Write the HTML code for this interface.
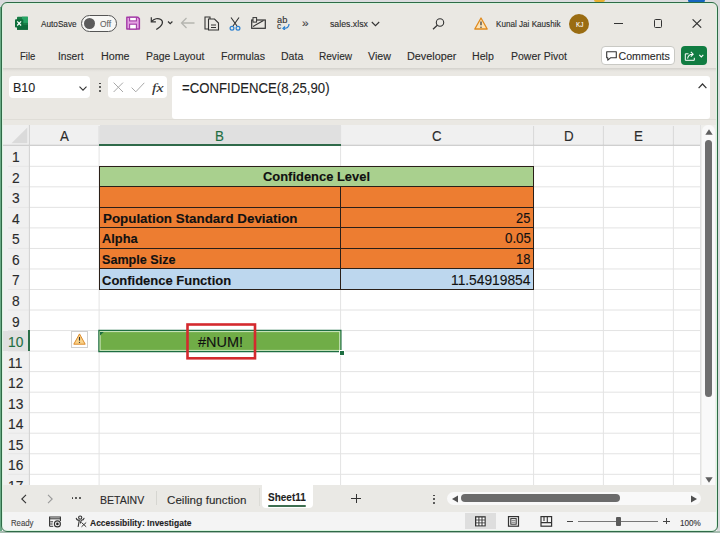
<!DOCTYPE html>
<html><head><meta charset="utf-8"><style>
html,body{margin:0;padding:0;width:720px;height:533px;overflow:hidden;background:#e6e6e6}
body{position:relative;font-family:"Liberation Sans", sans-serif}
.t{position:absolute;white-space:pre;line-height:1;transform-origin:0 0;-webkit-text-stroke:0.12px currentColor}
.r{position:absolute}
</style></head><body>
<div class="r" style="left:0px;top:0px;width:720px;height:533px;background:#dcdcdf"></div>
<div class="r" style="left:0px;top:7px;width:2px;height:526px;background:#6aaa85"></div>
<div class="r" style="left:0px;top:531px;width:720px;height:2px;background:#a9bfb3"></div>
<div class="r" style="left:593.5px;top:0px;width:11px;height:1.5px;background:#e8b030;border-radius:0 0 2px 2px"></div>
<div class="r" style="left:688px;top:0px;width:17px;height:2.5px;background:#1565c0;border-radius:0 0 8px 8px"></div>
<div class="r" style="left:1px;top:2px;width:717px;height:529.5px;background:#eae8e3;border-radius:6px"></div>
<svg class="r" style="left:14px;top:16px" width="16" height="15" viewBox="14 16 16 15">
<rect x="17" y="16.7" width="11" height="13.1" rx="0.8" fill="#1a7d46"/>
<rect x="22" y="16.7" width="6" height="6.2" fill="#27a465"/>
<rect x="17" y="25" width="11" height="4.8" fill="#0f6a3a"/>
<rect x="15" y="19.3" width="8.3" height="8.2" rx="0.9" fill="#0e6e3b"/>
<path d="M17.2 21.3 L21.1 25.5 M21.1 21.3 L17.2 25.5" stroke="#fff" stroke-width="1.2"/>
</svg>
<div class="t" style="left:40.70px;top:20px;font-size:8.72px;font-weight:400;color:#2b2b2b;font-family:'Liberation Sans', sans-serif;transform:scaleX(0.9418);">AutoSave</div>
<div class="r" style="left:81px;top:15.3px;width:35.5px;height:16.3px;border:1px solid #555;border-radius:9px;box-sizing:border-box;background:#f7f7f5"></div>
<div class="r" style="left:84.3px;top:17.9px;width:11px;height:11px;background:#5c5c5c;border-radius:50%"></div>
<div class="t" style="left:99.60px;top:20px;font-size:9.01px;font-weight:400;color:#666;font-family:'Liberation Sans', sans-serif;transform:scaleX(0.9333);">Off</div>
<svg class="r" style="left:125px;top:15px" width="17" height="16" viewBox="125 15 17 16">
<path d="M126.8 17.3 H138 L139.4 18.7 V29 H126.8 Z" fill="#e3a3e2" stroke="#a43ba7" stroke-width="1.4" stroke-linejoin="round"/>
<rect x="129.6" y="17.3" width="6.8" height="3.6" fill="#fff" stroke="#a43ba7" stroke-width="1.1"/>
<rect x="129.6" y="24.2" width="6.8" height="4.8" fill="#fff" stroke="#a43ba7" stroke-width="1.1"/>
</svg>
<svg class="r" style="left:148px;top:14px" width="28" height="18" viewBox="148 14 28 18">
<path d="M151.3 17.2 V21.8 H155.9" fill="none" stroke="#333" stroke-width="1.2"/>
<path d="M151.6 21.5 C154 18.6 158 17.6 160.8 19.6 C163.8 21.8 163 25.3 156.3 29.6" fill="none" stroke="#333" stroke-width="1.2"/>
<path d="M168 21.5 L170.2 23.6 L172.4 21.5" fill="none" stroke="#333" stroke-width="1.2"/>
</svg>
<svg class="r" style="left:180px;top:17px" width="16" height="12" viewBox="0 0 16 12">
<path d="M1.5 6 H14.5 M6.5 1 L1.5 6 L6.5 11" fill="none" stroke="#b5b5b0" stroke-width="1.3"/>
</svg>
<svg class="r" style="left:204px;top:16px" width="16" height="15" viewBox="0 0 16 15">
<path d="M1 1 H6 V13 H1 Z" fill="none" stroke="#333" stroke-width="1.1"/>
<path d="M4.5 3 H10.5 L14.5 7 V14 H4.5 Z" fill="#eae8e3" stroke="#333" stroke-width="1.1"/>
<path d="M7 9 H12 M7 11.5 H12" stroke="#333" stroke-width="1"/>
</svg>
<svg class="r" style="left:229px;top:17px" width="12" height="14" viewBox="0 0 12 14">
<path d="M2 0.5 L8 9 M10 0.5 L4 9" fill="none" stroke="#333" stroke-width="1.1"/>
<circle cx="3" cy="11.3" r="1.9" fill="none" stroke="#2a7fd0" stroke-width="1.2"/>
<circle cx="9" cy="11.3" r="1.9" fill="none" stroke="#2a7fd0" stroke-width="1.2"/>
</svg>
<svg class="r" style="left:251px;top:17px" width="15" height="12" viewBox="0 0 15 12">
<rect x="0.7" y="3" width="13.6" height="8.3" fill="none" stroke="#333" stroke-width="1.2"/>
<path d="M2 9.5 L12.5 3.5" stroke="#333" stroke-width="1.1"/>
<rect x="2" y="0.6" width="3.6" height="4.5" fill="#eae8e3" stroke="#333" stroke-width="1"/>
</svg>
<div class="t" style="left:276.90px;top:17px;font-size:8.2px;font-weight:400;color:#333;font-family:'Liberation Sans', sans-serif;transform:scaleX(1.1316);">ab</div>
<div class="t" style="left:276.80px;top:23px;font-size:8.2px;font-weight:400;color:#333;font-family:'Liberation Sans', sans-serif;transform:scaleX(1.0244);">c</div>
<svg class="r" style="left:281px;top:23px" width="9" height="7" viewBox="0 0 9 7">
<path d="M8 1 C8 4.5 6 5.5 2 5.5 M4 3.5 L2 5.5 L4 7" fill="none" stroke="#2a7fd0" stroke-width="1.2"/>
</svg>
<div class="t" style="left:302.30px;top:18px;font-size:10.5px;font-weight:400;color:#444;font-family:'Liberation Sans', sans-serif;transform:scaleX(1.1497);">»</div>
<div class="t" style="left:329.70px;top:20px;font-size:9.1px;font-weight:400;color:#2b2b2b;font-family:'Liberation Sans', sans-serif;transform:scaleX(0.9607);">sales.xlsx</div>
<svg class="r" style="left:371px;top:21px" width="9" height="6" viewBox="0 0 9 6">
<path d="M0.8 1 L4.5 4.7 L8.2 1" fill="none" stroke="#333" stroke-width="1.1"/>
</svg>
<svg class="r" style="left:432px;top:17.5px" width="13" height="12" viewBox="0 0 13 12">
<circle cx="8" cy="4.5" r="3.7" fill="none" stroke="#333" stroke-width="1.1"/>
<path d="M5.3 7.3 L1 11.3" stroke="#333" stroke-width="1.2"/>
</svg>
<svg class="r" style="left:474px;top:17px" width="14" height="13" viewBox="0 0 14 13">
<path d="M7 1 L13.2 12 H0.8 Z" fill="#fbe3b8" stroke="#e08a1e" stroke-width="1.3" stroke-linejoin="round"/>
<path d="M7 4.5 V8.3" stroke="#333" stroke-width="1.2"/>
<circle cx="7" cy="10.2" r="0.7" fill="#333"/>
</svg>
<div class="t" style="left:496.40px;top:20px;font-size:8.58px;font-weight:400;color:#2b2b2b;font-family:'Liberation Sans', sans-serif;transform:scaleX(0.9465);">Kunal Jai Kaushik</div>
<div class="r" style="left:568.8px;top:13.8px;width:20.2px;height:20px;background:#9a6c12;border-radius:50%"></div>
<div class="t" style="left:575.90px;top:21px;font-size:7.85px;font-weight:400;color:#fff;font-family:'Liberation Sans', sans-serif;transform:scaleX(0.7982);">KJ</div>
<div class="r" style="left:614px;top:22.5px;width:9px;height:1px;background:#333"></div>
<div class="r" style="left:653.5px;top:19.2px;width:8.5px;height:8.5px;border:1.1px solid #333;border-radius:1.5px;box-sizing:border-box"></div>
<svg class="r" style="left:692px;top:19px" width="10" height="9" viewBox="0 0 10 9">
<path d="M0.6 0.3 L9.2 8.7 M9.2 0.3 L0.6 8.7" stroke="#333" stroke-width="1.1"/>
</svg>
<div class="t" style="left:19.70px;top:51px;font-size:10.61px;font-weight:400;color:#2b2b2b;font-family:'Liberation Sans', sans-serif;transform:scaleX(0.8957);">File</div>
<div class="t" style="left:57.70px;top:51px;font-size:10.61px;font-weight:400;color:#2b2b2b;font-family:'Liberation Sans', sans-serif;transform:scaleX(0.9614);">Insert</div>
<div class="t" style="left:100.70px;top:51px;font-size:10.61px;font-weight:400;color:#2b2b2b;font-family:'Liberation Sans', sans-serif;transform:scaleX(1.0096);">Home</div>
<div class="t" style="left:146.00px;top:51px;font-size:10.61px;font-weight:400;color:#2b2b2b;font-family:'Liberation Sans', sans-serif;transform:scaleX(0.9786);">Page Layout</div>
<div class="t" style="left:221.00px;top:51px;font-size:10.61px;font-weight:400;color:#2b2b2b;font-family:'Liberation Sans', sans-serif;transform:scaleX(0.9945);">Formulas</div>
<div class="t" style="left:281.00px;top:51px;font-size:10.61px;font-weight:400;color:#2b2b2b;font-family:'Liberation Sans', sans-serif;transform:scaleX(0.9938);">Data</div>
<div class="t" style="left:318.60px;top:51px;font-size:10.61px;font-weight:400;color:#2b2b2b;font-family:'Liberation Sans', sans-serif;transform:scaleX(0.9483);">Review</div>
<div class="t" style="left:367.60px;top:51px;font-size:10.61px;font-weight:400;color:#2b2b2b;font-family:'Liberation Sans', sans-serif;transform:scaleX(1.0039);">View</div>
<div class="t" style="left:406.50px;top:51px;font-size:10.61px;font-weight:400;color:#2b2b2b;font-family:'Liberation Sans', sans-serif;transform:scaleX(1.0210);">Developer</div>
<div class="t" style="left:472.20px;top:51px;font-size:10.61px;font-weight:400;color:#2b2b2b;font-family:'Liberation Sans', sans-serif;transform:scaleX(0.9998);">Help</div>
<div class="t" style="left:511.00px;top:51px;font-size:10.61px;font-weight:400;color:#2b2b2b;font-family:'Liberation Sans', sans-serif;transform:scaleX(0.9893);">Power Pivot</div>
<div class="r" style="left:601.2px;top:46.3px;width:73.6px;height:19px;background:#fff;border:1px solid #c9c9c4;border-radius:4px;box-sizing:border-box"></div>
<svg class="r" style="left:605.5px;top:51px" width="11" height="10" viewBox="0 0 11 10">
<path d="M0.7 0.7 H10.3 V6.8 H4.5 L1.8 9.2 V6.8 H0.7 Z" fill="none" stroke="#333" stroke-width="1.1" stroke-linejoin="round"/>
</svg>
<div class="t" style="left:618.50px;top:51px;font-size:10.61px;font-weight:400;color:#2b2b2b;font-family:'Liberation Sans', sans-serif;transform:scaleX(1.0000);">Comments</div>
<div class="r" style="left:681.2px;top:45.8px;width:25.8px;height:19.5px;background:#107c41;border-radius:4px"></div>
<svg class="r" style="left:683px;top:49px" width="22" height="13" viewBox="683 49 22 13">
<path d="M688.5 53.8 H685.3 V60.3 H694.3 V57.8" fill="none" stroke="#fff" stroke-width="1"/>
<path d="M687.6 58.6 C688 55.6 690 54.2 692.6 54.2 M690.8 51.8 L693.2 54.2 L690.8 56.6" fill="none" stroke="#fff" stroke-width="1.05"/>
<path d="M699.3 54.9 L701.3 56.9 L703.3 54.9" fill="none" stroke="#fff" stroke-width="1.1"/>
</svg>
<div class="r" style="left:2px;top:68px;width:714.5px;height:57px;background:linear-gradient(#d6d4cf 0,#d6d4cf 1px,#e3e1dc 2px,#eae8e3 4px)"></div>
<div class="r" style="left:9px;top:75.75px;width:81.25px;height:22.5px;background:#fff;border-radius:4px"></div>
<div class="t" style="left:12.75px;top:81px;font-size:13.66px;font-weight:400;color:#1f1f1f;font-family:'Liberation Sans', sans-serif;transform:scaleX(0.9151);">B10</div>
<svg class="r" style="left:78.5px;top:85.5px" width="8" height="5" viewBox="0 0 8 5">
<path d="M0.5 0.6 L4 4.1 L7.5 0.6" fill="none" stroke="#333" stroke-width="1.1"/>
</svg>
<div class="r" style="left:98.8px;top:82.6px;width:1.9px;height:1.9px;background:#333;border-radius:50%"></div>
<div class="r" style="left:98.8px;top:86.2px;width:1.9px;height:1.9px;background:#333;border-radius:50%"></div>
<div class="r" style="left:98.8px;top:89.8px;width:1.9px;height:1.9px;background:#333;border-radius:50%"></div>
<div class="r" style="left:108px;top:75.75px;width:59px;height:22.5px;background:#fff;border-radius:4px"></div>
<svg class="r" style="left:112.5px;top:81.5px" width="11" height="11" viewBox="0 0 11 11">
<path d="M0.6 0.6 L10 10 M10 0.6 L0.6 10" stroke="#a8a8a8" stroke-width="1"/>
</svg>
<svg class="r" style="left:130.5px;top:81.5px" width="14" height="11" viewBox="0 0 14 11">
<path d="M0.6 5.6 L4.8 9.8 L13.3 0.8" fill="none" stroke="#a8a8a8" stroke-width="1"/>
</svg>
<div class="t" style="left:151.90px;top:81px;font-size:13.5px;font-weight:400;color:#2b2b2b;font-family:'Liberation Serif', serif;transform:scaleX(1.1728);font-style:italic">fx</div>
<div class="r" style="left:2px;top:119.2px;width:714.5px;height:1px;background:#dfddd7"></div>
<div class="r" style="left:171.7px;top:75.6px;width:538px;height:43.4px;background:#fff;border-radius:3px"></div>
<div class="t" style="left:181.70px;top:81px;font-size:14.53px;font-weight:400;color:#1f1f1f;font-family:'Liberation Sans', sans-serif;transform:scaleX(0.9076);">=CONFIDENCE(8,25,90)</div>
<svg class="r" style="left:698px;top:83px" width="9" height="6" viewBox="0 0 9 6">
<path d="M0.6 5.2 L4.5 1 L8.4 5.2" fill="none" stroke="#333" stroke-width="1.2"/>
</svg>
<div class="r" style="left:2px;top:125px;width:698.5px;height:20.5px;background:#f0f0f0"></div>
<div class="r" style="left:2px;top:145.5px;width:27.2px;height:339.5px;background:#f0f0f0"></div>
<div class="r" style="left:29.2px;top:145.5px;width:671.3px;height:339.5px;background:#fff"></div>
<svg class="r" style="left:11px;top:127px" width="17" height="17" viewBox="0 0 17 17"><path d="M16.3 0.5 V16.3 H0.5 Z" fill="#dadada"/></svg>
<svg class="r" style="left:0;top:0" width="720" height="533" viewBox="0 0 720 533"><path d="M29.5 166.30 H700.3" stroke="#e3e3e3" stroke-width="1"/><path d="M8 166.30 H29" stroke="#e6e6e6" stroke-width="1"/><path d="M29.5 186.84 H700.3" stroke="#e3e3e3" stroke-width="1"/><path d="M8 186.84 H29" stroke="#e6e6e6" stroke-width="1"/><path d="M29.5 207.37 H700.3" stroke="#e3e3e3" stroke-width="1"/><path d="M8 207.37 H29" stroke="#e6e6e6" stroke-width="1"/><path d="M29.5 227.90 H700.3" stroke="#e3e3e3" stroke-width="1"/><path d="M8 227.90 H29" stroke="#e6e6e6" stroke-width="1"/><path d="M29.5 248.44 H700.3" stroke="#e3e3e3" stroke-width="1"/><path d="M8 248.44 H29" stroke="#e6e6e6" stroke-width="1"/><path d="M29.5 268.97 H700.3" stroke="#e3e3e3" stroke-width="1"/><path d="M8 268.97 H29" stroke="#e6e6e6" stroke-width="1"/><path d="M29.5 289.50 H700.3" stroke="#e3e3e3" stroke-width="1"/><path d="M8 289.50 H29" stroke="#e6e6e6" stroke-width="1"/><path d="M29.5 310.03 H700.3" stroke="#e3e3e3" stroke-width="1"/><path d="M8 310.03 H29" stroke="#e6e6e6" stroke-width="1"/><path d="M29.5 330.57 H700.3" stroke="#e3e3e3" stroke-width="1"/><path d="M8 330.57 H29" stroke="#e6e6e6" stroke-width="1"/><path d="M29.5 351.10 H700.3" stroke="#e3e3e3" stroke-width="1"/><path d="M8 351.10 H29" stroke="#e6e6e6" stroke-width="1"/><path d="M29.5 371.63 H700.3" stroke="#e3e3e3" stroke-width="1"/><path d="M8 371.63 H29" stroke="#e6e6e6" stroke-width="1"/><path d="M29.5 392.17 H700.3" stroke="#e3e3e3" stroke-width="1"/><path d="M8 392.17 H29" stroke="#e6e6e6" stroke-width="1"/><path d="M29.5 412.70 H700.3" stroke="#e3e3e3" stroke-width="1"/><path d="M8 412.70 H29" stroke="#e6e6e6" stroke-width="1"/><path d="M29.5 433.23 H700.3" stroke="#e3e3e3" stroke-width="1"/><path d="M8 433.23 H29" stroke="#e6e6e6" stroke-width="1"/><path d="M29.5 453.76 H700.3" stroke="#e3e3e3" stroke-width="1"/><path d="M8 453.76 H29" stroke="#e6e6e6" stroke-width="1"/><path d="M29.5 474.30 H700.3" stroke="#e3e3e3" stroke-width="1"/><path d="M8 474.30 H29" stroke="#e6e6e6" stroke-width="1"/><path d="M29.5 494.83 H700.3" stroke="#e3e3e3" stroke-width="1"/><path d="M8 494.83 H29" stroke="#e6e6e6" stroke-width="1"/><path d="M99.1 145.5 V485" stroke="#e3e3e3" stroke-width="1"/><path d="M99.1 126 V145" stroke="#d8d8d8" stroke-width="1"/><path d="M340.6 145.5 V485" stroke="#e3e3e3" stroke-width="1"/><path d="M340.6 126 V145" stroke="#d8d8d8" stroke-width="1"/><path d="M533.6 145.5 V485" stroke="#e3e3e3" stroke-width="1"/><path d="M533.6 126 V145" stroke="#d8d8d8" stroke-width="1"/><path d="M603.4 145.5 V485" stroke="#e3e3e3" stroke-width="1"/><path d="M603.4 126 V145" stroke="#d8d8d8" stroke-width="1"/><path d="M673.4 145.5 V485" stroke="#e3e3e3" stroke-width="1"/><path d="M673.4 126 V145" stroke="#d8d8d8" stroke-width="1"/></svg>
<svg class="r" style="left:0;top:0" width="720" height="533" viewBox="0 0 720 533"><path d="M2 145.3 H700.3" stroke="#c4c4c4" stroke-width="1.1"/><path d="M29.4 125 V485" stroke="#d0d0d0" stroke-width="1"/></svg>
<div class="r" style="left:99.5px;top:125px;width:241px;height:20px;background:#e0e0e0"></div>
<div class="r" style="left:99.2px;top:144px;width:241.4px;height:2px;background:#2f6a4a"></div>
<div class="r" style="left:2px;top:330.567px;width:26.5px;height:20.533000000000015px;background:#e0e0e0"></div>
<div class="r" style="left:28.3px;top:330.267px;width:1.7px;height:21.133000000000017px;background:#2a6d47"></div>
<div class="t" style="left:59.73px;top:129px;font-size:14.83px;font-weight:400;color:#2b2b2b;font-family:'Liberation Sans', sans-serif;transform:scaleX(0.8997);">A</div>
<div class="t" style="left:215.46px;top:129px;font-size:14.83px;font-weight:400;color:#1e6e42;font-family:'Liberation Sans', sans-serif;transform:scaleX(0.8997);">B</div>
<div class="t" style="left:432.35px;top:129px;font-size:14.83px;font-weight:400;color:#2b2b2b;font-family:'Liberation Sans', sans-serif;transform:scaleX(0.8997);">C</div>
<div class="t" style="left:563.80px;top:129px;font-size:14.83px;font-weight:400;color:#2b2b2b;font-family:'Liberation Sans', sans-serif;transform:scaleX(0.8997);">D</div>
<div class="t" style="left:634.01px;top:129px;font-size:14.83px;font-weight:400;color:#2b2b2b;font-family:'Liberation Sans', sans-serif;transform:scaleX(0.8997);">E</div>
<div class="t" style="left:11.57px;top:150px;font-size:14.53px;font-weight:400;color:#2b2b2b;font-family:'Liberation Sans', sans-serif;transform:scaleX(0.9503);">1</div>
<div class="t" style="left:11.57px;top:171px;font-size:14.53px;font-weight:400;color:#2b2b2b;font-family:'Liberation Sans', sans-serif;transform:scaleX(0.9503);">2</div>
<div class="t" style="left:11.57px;top:191px;font-size:14.53px;font-weight:400;color:#2b2b2b;font-family:'Liberation Sans', sans-serif;transform:scaleX(0.9503);">3</div>
<div class="t" style="left:11.57px;top:212px;font-size:14.53px;font-weight:400;color:#2b2b2b;font-family:'Liberation Sans', sans-serif;transform:scaleX(0.9503);">4</div>
<div class="t" style="left:11.57px;top:232px;font-size:14.53px;font-weight:400;color:#2b2b2b;font-family:'Liberation Sans', sans-serif;transform:scaleX(0.9503);">5</div>
<div class="t" style="left:11.57px;top:253px;font-size:14.53px;font-weight:400;color:#2b2b2b;font-family:'Liberation Sans', sans-serif;transform:scaleX(0.9503);">6</div>
<div class="t" style="left:11.57px;top:273px;font-size:14.53px;font-weight:400;color:#2b2b2b;font-family:'Liberation Sans', sans-serif;transform:scaleX(0.9503);">7</div>
<div class="t" style="left:11.57px;top:294px;font-size:14.53px;font-weight:400;color:#2b2b2b;font-family:'Liberation Sans', sans-serif;transform:scaleX(0.9503);">8</div>
<div class="t" style="left:11.57px;top:315px;font-size:14.53px;font-weight:400;color:#2b2b2b;font-family:'Liberation Sans', sans-serif;transform:scaleX(0.9503);">9</div>
<div class="t" style="left:7.74px;top:335px;font-size:14.53px;font-weight:400;color:#1e6e42;font-family:'Liberation Sans', sans-serif;transform:scaleX(0.9503);">10</div>
<div class="t" style="left:8.22px;top:356px;font-size:14.53px;font-weight:400;color:#2b2b2b;font-family:'Liberation Sans', sans-serif;transform:scaleX(0.9503);">11</div>
<div class="t" style="left:7.74px;top:376px;font-size:14.53px;font-weight:400;color:#2b2b2b;font-family:'Liberation Sans', sans-serif;transform:scaleX(0.9503);">12</div>
<div class="t" style="left:7.74px;top:397px;font-size:14.53px;font-weight:400;color:#2b2b2b;font-family:'Liberation Sans', sans-serif;transform:scaleX(0.9503);">13</div>
<div class="t" style="left:7.74px;top:417px;font-size:14.53px;font-weight:400;color:#2b2b2b;font-family:'Liberation Sans', sans-serif;transform:scaleX(0.9503);">14</div>
<div class="t" style="left:7.74px;top:438px;font-size:14.53px;font-weight:400;color:#2b2b2b;font-family:'Liberation Sans', sans-serif;transform:scaleX(0.9503);">15</div>
<div class="t" style="left:7.74px;top:458px;font-size:14.53px;font-weight:400;color:#2b2b2b;font-family:'Liberation Sans', sans-serif;transform:scaleX(0.9503);">16</div>
<div class="t" style="left:7.74px;top:479px;font-size:14.53px;font-weight:400;color:#2b2b2b;font-family:'Liberation Sans', sans-serif;transform:scaleX(0.9503);">17</div>
<div class="r" style="left:99.2px;top:166.303px;width:434.5px;height:20.533000000000015px;background:#a9d08e"></div>
<div class="r" style="left:99.2px;top:186.836px;width:434.5px;height:82.132px;background:#ed7d31"></div>
<div class="r" style="left:99.2px;top:268.968px;width:434.5px;height:20.53299999999996px;background:#bdd7ee"></div>
<div class="r" style="left:99.2px;top:165.803px;width:435px;height:1px;background:#2a1f18"></div>
<div class="r" style="left:99.2px;top:186.336px;width:435px;height:1px;background:#2a1f18"></div>
<div class="r" style="left:99.2px;top:206.86900000000003px;width:435px;height:1px;background:#2a1f18"></div>
<div class="r" style="left:99.2px;top:227.40200000000002px;width:435px;height:1px;background:#2a1f18"></div>
<div class="r" style="left:99.2px;top:247.935px;width:435px;height:1px;background:#2a1f18"></div>
<div class="r" style="left:99.2px;top:268.468px;width:435px;height:1px;background:#2a1f18"></div>
<div class="r" style="left:99.2px;top:289.001px;width:435px;height:1px;background:#2a1f18"></div>
<div class="r" style="left:99.2px;top:166.303px;width:1px;height:123.19799999999998px;background:#2a1f18"></div>
<div class="r" style="left:533.2px;top:166.303px;width:1px;height:123.19799999999998px;background:#2a1f18"></div>
<div class="r" style="left:340.1px;top:186.836px;width:1px;height:102.66499999999996px;background:#2a1f18"></div>
<div class="t" style="left:263.20px;top:170px;font-size:13.66px;font-weight:700;color:#111;font-family:'Liberation Sans', sans-serif;transform:scaleX(0.9460);">Confidence Level</div>
<div class="t" style="left:102.50px;top:212px;font-size:13.52px;font-weight:700;color:#111;font-family:'Liberation Sans', sans-serif;transform:scaleX(0.9884);">Population Standard Deviation</div>
<div class="t" style="left:102.30px;top:232px;font-size:13.52px;font-weight:700;color:#111;font-family:'Liberation Sans', sans-serif;transform:scaleX(0.9481);">Alpha</div>
<div class="t" style="left:102.30px;top:253px;font-size:13.52px;font-weight:700;color:#111;font-family:'Liberation Sans', sans-serif;transform:scaleX(0.9317);">Sample Size</div>
<div class="t" style="left:102.30px;top:274px;font-size:13.52px;font-weight:700;color:#111;font-family:'Liberation Sans', sans-serif;transform:scaleX(0.9609);">Confidence Function</div>
<div class="t" style="left:516.40px;top:212px;font-size:13.95px;font-weight:400;color:#111;font-family:'Liberation Sans', sans-serif;transform:scaleX(0.9235);">25</div>
<div class="t" style="left:504.80px;top:232px;font-size:13.95px;font-weight:400;color:#111;font-family:'Liberation Sans', sans-serif;transform:scaleX(0.9546);">0.05</div>
<div class="t" style="left:516.40px;top:253px;font-size:13.95px;font-weight:400;color:#111;font-family:'Liberation Sans', sans-serif;transform:scaleX(0.9235);">18</div>
<div class="t" style="left:451.25px;top:274px;font-size:13.95px;font-weight:400;color:#111;font-family:'Liberation Sans', sans-serif;transform:scaleX(0.9879);">11.54919854</div>
<div class="r" style="left:99.2px;top:330.567px;width:241.4px;height:20.533000000000015px;background:#70ad47"></div>
<svg class="r" style="left:97px;top:328px" width="248" height="26" viewBox="97 328 248 26"><rect x="98.9" y="330.4" width="242" height="21.2" fill="none" stroke="#1e6e42" stroke-width="1.3"/><rect x="100.1" y="331.6" width="239.6" height="18.8" fill="none" stroke="#cfe8c4" stroke-width="1"/></svg>
<div class="r" style="left:338.8px;top:349.5px;width:4px;height:4px;background:#1e6e42;border:1px solid #fff;box-sizing:content-box"></div>
<svg class="r" style="left:99.8px;top:331.8px" width="5" height="5" viewBox="0 0 5 5"><path d="M0 0 H3.8 L0 3.6 Z" fill="#1e6e42"/></svg>
<div class="t" style="left:197.50px;top:335px;font-size:14.83px;font-weight:400;color:#111;font-family:'Liberation Sans', sans-serif;transform:scaleX(0.9757);">#NUM!</div>
<svg class="r" style="left:184px;top:321px" width="75" height="41" viewBox="184 321 75 41"><rect x="187.5" y="324.5" width="67.5" height="33.8" fill="none" stroke="#d42a2e" stroke-width="2.6"/></svg>
<div class="r" style="left:71.3px;top:331px;width:16.3px;height:16.5px;background:#fff;border:1px solid #cfcfcf;box-sizing:border-box"></div>
<svg class="r" style="left:73px;top:333px" width="13" height="12" viewBox="0 0 13 12">
<path d="M6.5 0.9 L12.2 11.2 H0.8 Z" fill="#f9d289" stroke="#dc8a2a" stroke-width="1" stroke-linejoin="round"/>
<path d="M6.5 4 V7.6" stroke="#333" stroke-width="1.1"/>
<circle cx="6.5" cy="9.3" r="0.65" fill="#333"/>
</svg>
<div class="r" style="left:700.3px;top:125px;width:16.5px;height:360px;background:#eeeeeb"></div>
<div class="r" style="left:700.3px;top:125px;width:0.8px;height:360px;background:#e2e2e2"></div>
<div class="r" style="left:702px;top:125.3px;width:12.8px;height:360px;background:#f9f9f9;border-radius:6px 6px 0 0"></div>
<svg class="r" style="left:704.5px;top:129px" width="8" height="6" viewBox="0 0 8 6"><path d="M4 0.3 L7.7 5.7 H0.3 Z" fill="#5f5f5f"/></svg>
<div class="r" style="left:705px;top:140px;width:7px;height:257px;background:#6e6e6e;border-radius:3.5px"></div>
<svg class="r" style="left:704.8px;top:477px" width="8" height="6" viewBox="0 0 8 6"><path d="M0.3 0.3 H7.7 L4 5.7 Z" fill="#5f5f5f"/></svg>
<div class="r" style="left:2px;top:485px;width:714.5px;height:26.5px;background:#eae9e5"></div>
<svg class="r" style="left:20px;top:494px" width="8" height="10" viewBox="0 0 8 10"><path d="M6 0.8 L1.8 5 L6 9.2" fill="none" stroke="#333" stroke-width="1.1"/></svg>
<svg class="r" style="left:46px;top:494px" width="8" height="10" viewBox="0 0 8 10"><path d="M2 0.8 L6.2 5 L2 9.2" fill="none" stroke="#9a9a9a" stroke-width="1.1"/></svg>
<div class="r" style="left:71.5px;top:497.4px;width:1.8px;height:1.8px;background:#333;border-radius:50%"></div>
<div class="r" style="left:75.3px;top:497.4px;width:1.8px;height:1.8px;background:#333;border-radius:50%"></div>
<div class="r" style="left:79.1px;top:497.4px;width:1.8px;height:1.8px;background:#333;border-radius:50%"></div>
<div class="t" style="left:100.00px;top:495px;font-size:10.9px;font-weight:400;color:#2b2b2b;font-family:'Liberation Sans', sans-serif;transform:scaleX(0.9654);">BETAINV</div>
<div class="r" style="left:155.5px;top:491px;width:1px;height:13.5px;background:#d6d6d1"></div>
<div class="t" style="left:166.70px;top:494px;font-size:11.63px;font-weight:400;color:#2b2b2b;font-family:'Liberation Sans', sans-serif;transform:scaleX(0.9981);">Ceiling function</div>
<div class="r" style="left:258.5px;top:488px;width:1px;height:18px;background:#dcdcd7"></div>
<div class="r" style="left:261.7px;top:485px;width:51.6px;height:23.3px;background:#fff;border-radius:0 0 4px 4px"></div>
<div class="t" style="left:268.30px;top:492px;font-size:11.34px;font-weight:700;color:#1e1e1e;font-family:'Liberation Sans', sans-serif;transform:scaleX(0.8818);">Sheet11</div>
<div class="r" style="left:268px;top:505px;width:38.3px;height:1.9px;background:#3d6e50;border-radius:1px"></div>
<div class="r" style="left:351.3px;top:498.2px;width:9.6px;height:1.1px;background:#333"></div>
<div class="r" style="left:355.6px;top:493.9px;width:1.1px;height:9.6px;background:#333"></div>
<div class="r" style="left:432.9px;top:494.6px;width:1.8px;height:1.8px;background:#333;border-radius:50%"></div>
<div class="r" style="left:432.9px;top:498.2px;width:1.8px;height:1.8px;background:#333;border-radius:50%"></div>
<div class="r" style="left:432.9px;top:501.8px;width:1.8px;height:1.8px;background:#333;border-radius:50%"></div>
<div class="r" style="left:447px;top:491.7px;width:254.2px;height:13.3px;background:#f9f9f9;border-radius:7px"></div>
<svg class="r" style="left:450.5px;top:494.5px" width="8" height="8" viewBox="0 0 8 8"><path d="M7 0.5 V7.5 L1 4 Z" fill="#505050"/></svg>
<div class="r" style="left:460.8px;top:494.3px;width:159.2px;height:8px;background:#6b6b6b;border-radius:4px"></div>
<svg class="r" style="left:690px;top:494.5px" width="8" height="8" viewBox="0 0 8 8"><path d="M1 0.5 V7.5 L7 4 Z" fill="#505050"/></svg>
<div class="r" style="left:2px;top:511.5px;width:714.5px;height:19px;background:#f4f4f4"></div>
<div class="t" style="left:11.25px;top:518px;font-size:9.59px;font-weight:400;color:#444;font-family:'Liberation Sans', sans-serif;transform:scaleX(0.8118);">Ready</div>
<svg class="r" style="left:48px;top:515px" width="15" height="14" viewBox="48 515 15 14">
<path d="M49.6 526.3 V517 H60.4 V521" fill="none" stroke="#333" stroke-width="1.1"/>
<path d="M49.6 518.8 H60.4" stroke="#333" stroke-width="1"/>
<path d="M49.6 526.3 H53.2 M50.2 521.8 H53 M50.2 524 H52.6" stroke="#333" stroke-width="1"/>
<circle cx="57.4" cy="523.9" r="3" fill="#f4f4f4" stroke="#333" stroke-width="1.1"/>
<circle cx="57.4" cy="523.9" r="1.3" fill="#222"/>
</svg>
<svg class="r" style="left:74px;top:515px" width="14" height="14" viewBox="74 515 14 14">
<circle cx="80.2" cy="517.6" r="1.6" fill="none" stroke="#333" stroke-width="1.1"/>
<path d="M76.3 518.3 C76.6 520 78.3 520.2 79.3 520.2 L78.2 526.5 M84 518.3 C83.7 520 82.2 520.2 81.2 520.2 L80.5 523" fill="none" stroke="#333" stroke-width="1.1" stroke-linecap="round"/>
<path d="M81.5 522.5 L86.2 526.8 M86.2 522.5 L81.5 526.8" stroke="#333" stroke-width="1"/>
</svg>
<div class="t" style="left:90.00px;top:518px;font-size:9.74px;font-weight:700;color:#1e1e1e;font-family:'Liberation Sans', sans-serif;transform:scaleX(0.8720);">Accessibility: Investigate</div>
<div class="r" style="left:464.6px;top:512.5px;width:31.6px;height:16.5px;background:#dedede"></div>
<svg class="r" style="left:474px;top:515px" width="13" height="13" viewBox="474 515 13 13">
<rect x="475" y="516.2" width="10.7" height="10.2" fill="#333"/>
<rect x="476.3" y="517.5" width="2.1" height="2.1" fill="#fff"/><rect x="479.4" y="517.5" width="2.1" height="2.1" fill="#fff"/><rect x="482.5" y="517.5" width="2.1" height="2.1" fill="#fff"/>
<rect x="476.3" y="520.4" width="2.1" height="2.1" fill="#fff"/><rect x="479.4" y="520.4" width="2.1" height="2.1" fill="#fff"/><rect x="482.5" y="520.4" width="2.1" height="2.1" fill="#fff"/>
<rect x="476.3" y="523.3" width="2.1" height="2.1" fill="#fff"/><rect x="479.4" y="523.3" width="2.1" height="2.1" fill="#fff"/><rect x="482.5" y="523.3" width="2.1" height="2.1" fill="#fff"/>
</svg>
<svg class="r" style="left:507px;top:515px" width="13" height="13" viewBox="507 515 13 13">
<rect x="508.5" y="516.6" width="10" height="9.6" fill="none" stroke="#333" stroke-width="1.2"/>
<rect x="510.8" y="518.6" width="5.4" height="5.6" fill="none" stroke="#333" stroke-width="1"/>
<path d="M511.5 520.6 H515.5 M511.5 522.3 H515.5" stroke="#555" stroke-width="0.7"/>
</svg>
<svg class="r" style="left:539px;top:515px" width="14" height="13" viewBox="539 515 14 13">
<rect x="541" y="516.6" width="10.6" height="9.6" fill="none" stroke="#333" stroke-width="1.2"/>
<path d="M544 516.6 V521 M547.3 516.6 V522.6 H541 M547.3 522.6 H551.6" fill="none" stroke="#333" stroke-width="1.1"/>
</svg>
<div class="r" style="left:566.7px;top:520.5px;width:6.6px;height:1px;background:#444"></div>
<div class="r" style="left:578.3px;top:520.5px;width:80px;height:1.3px;background:#777"></div>
<div class="r" style="left:615.8px;top:516.7px;width:5px;height:9.1px;background:#5a5a5a;border-radius:1px"></div>
<div class="r" style="left:663px;top:520.5px;width:6.5px;height:1px;background:#444"></div>
<div class="r" style="left:665.7px;top:517.7px;width:1px;height:6.5px;background:#444"></div>
<div class="t" style="left:680.40px;top:518px;font-size:9.74px;font-weight:400;color:#333;font-family:'Liberation Sans', sans-serif;transform:scaleX(0.8362);">100%</div>
<div class="r" style="left:0.9px;top:1.9px;width:717.4px;height:530.2px;border:1.2px solid #2f6a47;border-radius:6px;box-shadow:inset 0 0 0 1px rgba(215,245,222,.9);box-sizing:border-box;pointer-events:none"></div>
</body></html>
